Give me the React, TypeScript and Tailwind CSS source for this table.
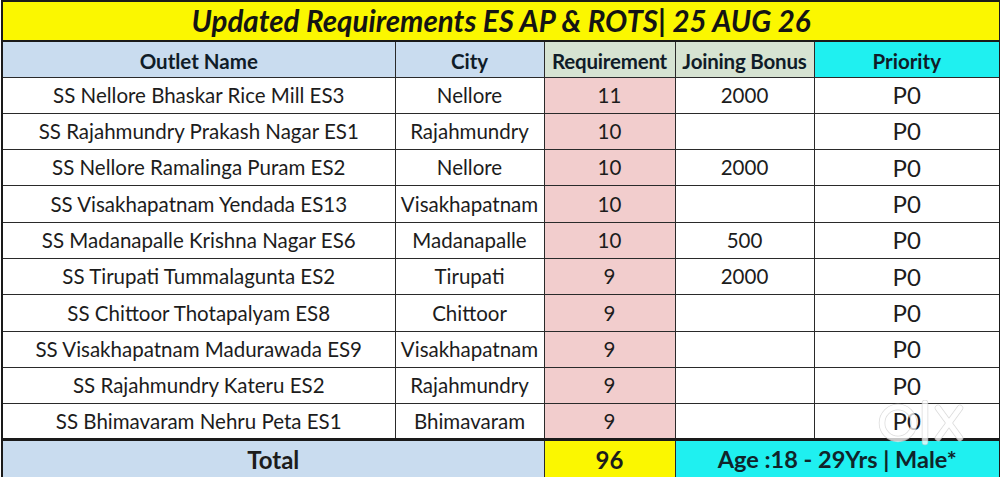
const rows = [
  { outlet: 'SS Nellore Bhaskar Rice Mill ES3', city: 'Nellore', req: 11, bonus: '2000' },
  { outlet: 'SS Rajahmundry Prakash Nagar ES1', city: 'Rajahmundry', req: 10, bonus: '' },
  { outlet: 'SS Nellore Ramalinga Puram ES2', city: 'Nellore', req: 10, bonus: '2000' },
  { outlet: 'SS Visakhapatnam Yendada ES13', city: 'Visakhapatnam', req: 10, bonus: '' },
  { outlet: 'SS Madanapalle Krishna Nagar ES6', city: 'Madanapalle', req: 10, bonus: '500' },
  { outlet: 'SS Tirupati Tummalagunta ES2', city: 'Tirupati', req: 9, bonus: '2000' },
  { outlet: 'SS Chittoor Thotapalyam ES8', city: 'Chittoor', req: 9, bonus: '' },
  { outlet: 'SS Visakhapatnam Madurawada ES9', city: 'Visakhapatnam', req: 9, bonus: '' },
  { outlet: 'SS Rajahmundry Kateru ES2', city: 'Rajahmundry', req: 9, bonus: '' },
  { outlet: 'SS Bhimavaram Nehru Peta ES1', city: 'Bhimavaram', req: 9, bonus: '' },
];

const cell = 'border border-[#2a2a2a] text-center align-middle p-0 whitespace-nowrap';

export default function App() {
  return (
    <div className="relative h-[477px] w-[1000px] overflow-hidden bg-white font-['Lato',sans-serif] text-[#1c1c1c]">
      <table className="ml-[1px] w-[998px] table-fixed border-collapse border-2 border-[#1a1a1a]">
        <colgroup>
          <col className="w-[393px]" />
          <col className="w-[149px]" />
          <col className="w-[131px]" />
          <col className="w-[139px]" />
          <col className="w-[186px]" />
        </colgroup>
        <thead>
          <tr className="h-[40px]">
            <th
              colSpan={5}
              className="border-2 border-[#1a1a1a] bg-[#fbf700] p-0 text-center text-[29.5px] font-bold italic leading-none text-[#141414]"
            >
              Updated Requirements ES AP &amp; ROTS| 25 AUG 26
            </th>
          </tr>
          <tr className="h-[36px] text-[20.5px] font-bold leading-none text-[#101c28]">
            <th className={`${cell} bg-[#c9dcef] pt-[3px]`}>Outlet Name</th>
            <th className={`${cell} bg-[#c9dcef] pt-[3px]`}>City</th>
            <th className={`${cell} bg-[#d6e3d2] pt-[3px] tracking-[-0.2px]`}>Requirement</th>
            <th className={`${cell} bg-[#d6e3d2] pt-[3px] tracking-[-0.2px]`}>Joining Bonus</th>
            <th className={`${cell} bg-[#1ff0f0] pt-[3px]`}>Priority</th>
          </tr>
        </thead>
        <tbody className="text-[20.5px] leading-none">
          {rows.map((r, i) => (
            <tr key={i} className="h-[36.3px]">
              <td className={cell}>{r.outlet}</td>
              <td className={cell}>{r.city}</td>
              <td className={`${cell} bg-[#f2cdcd]`}>{r.req}</td>
              <td className={cell}>{r.bonus}</td>
              <td className={`${cell} text-[24px]`}>P0</td>
            </tr>
          ))}
          <tr className="h-[39px] border-t-[3px] border-[#1a1a1a] font-bold">
            <td colSpan={2} className={`${cell} bg-[#c9dcef] text-[24px]`}>
              Total
            </td>
            <td className={`${cell} bg-[#fbf700] text-[24px]`}>96</td>
            <td colSpan={2} className={`${cell} bg-[#1ff0f0] text-[23.5px] text-[#10242a]`}>
              Age :18 - 29Yrs | Male*
            </td>
          </tr>
        </tbody>
      </table>

      {/* olx watermark */}
      <svg
        className="absolute left-[876px] top-[400px] opacity-75"
        width="94"
        height="48"
        viewBox="0 0 94 48"
        fill="none"
      >
        <g stroke="#d0d0d0" strokeWidth="6.5" strokeLinecap="round">
          <circle cx="22" cy="23" r="16" />
          <line x1="49" y1="3" x2="49" y2="42" />
          <line x1="62" y1="8" x2="84" y2="38" />
          <line x1="84" y1="8" x2="62" y2="38" />
        </g>
        <g stroke="white" strokeWidth="5" strokeLinecap="round">
          <circle cx="22" cy="23" r="16" />
          <line x1="49" y1="3" x2="49" y2="42" />
          <line x1="62" y1="8" x2="84" y2="38" />
          <line x1="84" y1="8" x2="62" y2="38" />
        </g>
      </svg>
    </div>
  );
}
